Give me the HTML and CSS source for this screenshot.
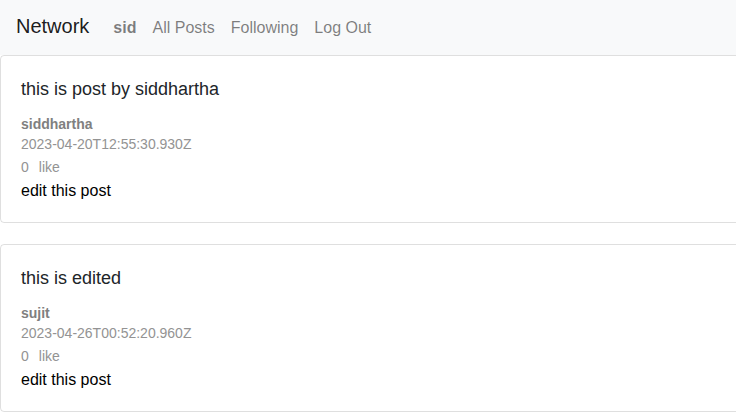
FILE: index.html
```html
<!DOCTYPE html>
<html>
<head>
<meta charset="utf-8">
<title>Network</title>
<link rel="stylesheet" href="styles.css">
</head>
<body>
<nav class="navbar">
  <a class="brand" href="#">Network</a>
  <ul class="nav">
    <li><a class="nav-link user" href="#">sid</a></li>
    <li><a class="nav-link" href="#">All Posts</a></li>
    <li><a class="nav-link" href="#">Following</a></li>
    <li><a class="nav-link" href="#">Log Out</a></li>
  </ul>
</nav>
<main class="feed">
  <div class="card">
    <h5 class="title">this is post by siddhartha</h5>
    <h6 class="author">siddhartha</h6>
    <div class="date">2023-04-20T12:55:30.930Z</div>
    <div class="likes"><span>0</span><span class="like">like</span></div>
    <a class="edit" href="#">edit this post</a>
  </div>
  <div class="card">
    <h5 class="title">this is edited</h5>
    <h6 class="author">sujit</h6>
    <div class="date">2023-04-26T00:52:20.960Z</div>
    <div class="likes"><span>0</span><span class="like">like</span></div>
    <a class="edit" href="#">edit this post</a>
  </div>
</main>
</body>
</html>
```
FILE: styles.css
```css
html, body {
  margin: 0;
  padding: 0;
  overflow: hidden;
}
body {
  font-family: "Liberation Sans", Arial, sans-serif;
  font-size: 16px;
  line-height: 1.5;
  color: #212529;
  background: #fff;
}
a {
  text-decoration: none;
}
.navbar {
  display: flex;
  align-items: baseline;
  box-sizing: border-box;
  height: 55px;
  padding: 11px 16px 0;
  background: #f8f9fa;
}
.brand {
  font-size: 20px;
  line-height: 30px;
  color: rgba(0, 0, 0, 0.9);
  margin-right: 16px;
}
.nav {
  display: flex;
  list-style: none;
  margin: 0;
  padding: 0;
}
.nav-link {
  display: block;
  padding: 0 8px;
  line-height: 24px;
  color: rgba(0, 0, 0, 0.5);
}
.nav-link.user {
  font-weight: bold;
}
.feed {
  width: 770px;
}
.card {
  display: flex;
  flex-direction: column;
  align-items: flex-start;
  border: 1px solid rgba(0, 0, 0, 0.125);
  border-radius: 4px;
  padding: 20px 20px 19px;
  margin-bottom: 21px;
}
.title {
  margin: 0 0 13px;
  font-size: 18px;
  line-height: 27px;
  font-weight: 500;
}
.author {
  margin: 0;
  font-size: 14px;
  line-height: 17px;
  font-weight: bold;
  color: #808080;
}
.date {
  font-size: 14px;
  line-height: 22px;
  color: #939393;
}
.likes {
  margin-top: 1px;
  font-size: 14px;
  line-height: 22px;
  color: #939393;
}
.like {
  margin-left: 10px;
}
.edit {
  margin-top: 1px;
  color: #000;
  font-size: 16px;
  line-height: 24px;
}
```
